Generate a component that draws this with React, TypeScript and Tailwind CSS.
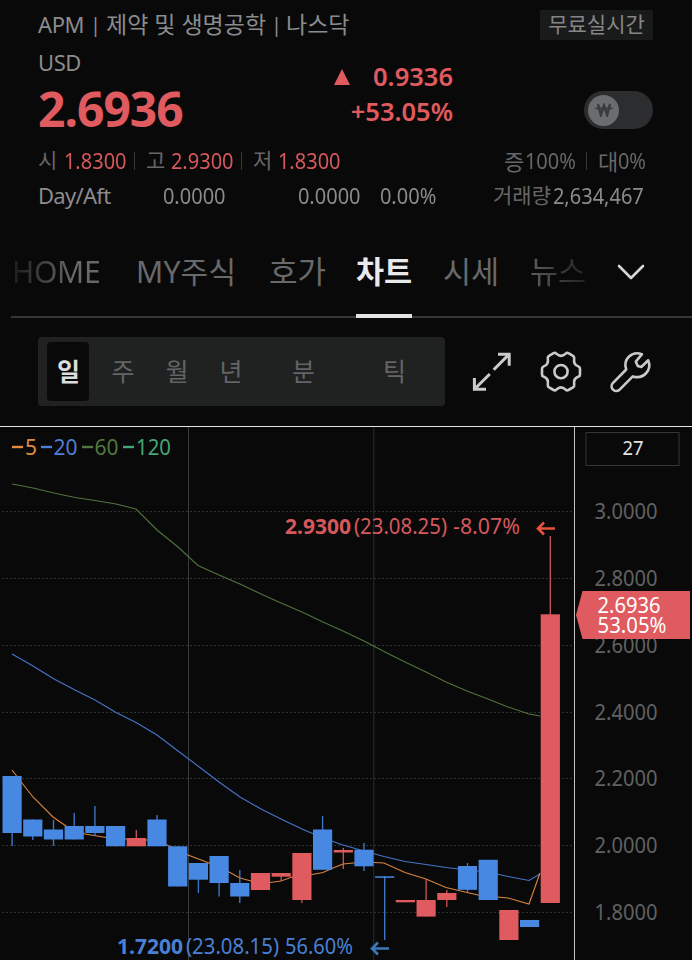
import React from 'react'

type Candle = { top: number; bottom: number; high?: number; low?: number; up?: boolean }

const RED = '#e05b5f'
const BLUE = '#4788e3'
const STEP = 20.7

const candles: Candle[] = [
  { top: 776, bottom: 833, low: 846 },
  { top: 819.5, bottom: 836.5, low: 840 },
  { top: 829.5, bottom: 839.5, high: 820, low: 846 },
  { top: 826, bottom: 839.5, high: 813 },
  { top: 826, bottom: 833, high: 806, low: 836 },
  { top: 826, bottom: 846.3 },
  { top: 838, bottom: 846.3, high: 830, up: true },
  { top: 819.5, bottom: 846.3, high: 815 },
  { top: 846.3, bottom: 886.5 },
  { top: 863, bottom: 879.7, low: 893 },
  { top: 856, bottom: 883, low: 896.5 },
  { top: 883, bottom: 896.5, high: 870, low: 903 },
  { top: 873, bottom: 890, up: true },
  { top: 873, bottom: 876.7, low: 881, up: true },
  { top: 853, bottom: 900, low: 903, up: true },
  { top: 829.5, bottom: 869.8, high: 816 },
  { top: 850, bottom: 852.5, high: 848, low: 869, up: true },
  { top: 849.7, bottom: 866.3, high: 843, low: 871 },
  { top: 876.3, bottom: 877.8, low: 940 },
  { top: 900, bottom: 902.3, up: true },
  { top: 900, bottom: 916.6, high: 879, up: true },
  { top: 893, bottom: 900, high: 890, low: 907, up: true },
  { top: 866, bottom: 889.8, high: 863, low: 892 },
  { top: 859.8, bottom: 900 },
  { top: 910, bottom: 940, up: true },
  { top: 920, bottom: 927 },
  { top: 614.3, bottom: 903, high: 536, up: true },
]

const ma5 =
  '12,770 22,783 33,797 53,817 66,826 85,834 106,837.5 126,839 147,840 167,845 188,855 209,863 229,872 240,878 251,881 270,882.5 281,881 292,877 312,874.5 323,872.5 333,868 343,864 364,862 374,862.5 384,863 405,872.5 426,879 446,887.5 467,892.5 478,895 497,897 508,898 529,904 540,873'
const ma20 =
  '12,654 33,666 54,679 75,690 95,700 116,712.5 137,723 157,735 178,751 198,766 219,782 240,797 261,809 281,819 302,829 323,838 343,845 364,851 384,856.5 405,861.5 426,864.5 446,867.5 467,870 488,872 508,876.5 529,880.5 540,874'
const ma60 =
  '12,484 33,488 54,493 75,497.5 95,500.5 116,504 136,509 157,530 178,547 198,565.5 219,575 240,584 261,594 281,603 302,612 323,622 343,631 364,641 384,651.5 405,662 426,672 446,682 467,691 488,699 508,707 529,714 540,716'

const grid = [
  { y: 511.5, label: '3.0000' },
  { y: 578.5, label: '2.8000' },
  { y: 645.5, label: '2.6000' },
  { y: 712.5, label: '2.4000' },
  { y: 778.5, label: '2.2000' },
  { y: 845.5, label: '2.0000' },
  { y: 912.5, label: '1.8000' },
]

const legend = [
  { x: 12, textX: 25, width: 12, label: '5', color: '#e08a42' },
  { x: 41, textX: 53.5, width: 24, label: '20', color: '#4f7fd6' },
  { x: 82, textX: 94.5, width: 24, label: '60', color: '#52783f' },
  { x: 123, textX: 136, width: 35, label: '120', color: '#43a67a' },
]

// narrow numerals
const Num = ({ children }: { children: React.ReactNode }) => (
  <span className="inline-block origin-left scale-x-[0.91] pb-[2px] pl-px">{children}</span>
)

const Divider = () => <span className="h-[18px] w-px bg-[#353637]" />

const Header = () => (
  <header className="h-[238px] pl-[38px] pr-[39px] text-[22px] text-[#8b8c8e]">
    <div className="flex h-[49px] items-center justify-between">
      <div className="flex items-center whitespace-pre text-[23px]">
        <span className="w-[52px] text-[22px] tracking-[-0.4px]">APM</span>
        <span className="w-[16px] text-[20px]">|</span>
        <span className="w-[165px]">제약 및 생명공학</span>
        <span className="w-[15px] text-[20px]">|</span>
        <span>나스닥</span>
      </div>
      <div className="mt-px flex h-[30px] w-[113px] items-center justify-center bg-[#191a1a] text-[21px] text-[#858688]">
        무료실시간
      </div>
    </div>

    <div className="flex h-[95px]">
      <div className="w-[215px]">
        <div className="h-[27px] leading-[27px] tracking-[-0.4px]">USD</div>
        <div className="h-[64px] text-[48px] font-bold leading-[65px] tracking-[-1px] text-[#e05b5f]">2.6936</div>
      </div>
      <div className="w-[200px] pt-[10px] text-right text-[25.5px] font-semibold text-[#e05b5f]">
        <div className="flex h-[35px] items-center justify-end">
          <svg className="mr-[23px]" width="16" height="16" viewBox="0 0 16 16">
            <path d="M8 0 L16 16 H0 Z" fill={RED} />
          </svg>
          <span>0.9336</span>
        </div>
        <div className="h-[35px] leading-[35px]">+53.05%</div>
      </div>
      <div className="ml-auto mt-[42px] flex h-[38px] w-[69px] items-center rounded-full bg-[#2c2d2f] pl-1">
        <div className="flex size-[31px] items-center justify-center rounded-full bg-[#6b6c6e]">
          <svg width="18" height="14" viewBox="0 0 18 14" fill="none" stroke="#3a3b3d" strokeWidth="2.4">
            <path d="M3 1 L5.8 12 L9 2.5 L12.2 12 L15 1" />
            <path d="M0.5 5.4 H17.5" strokeWidth="1.8" />
          </svg>
        </div>
      </div>
    </div>

    <div className="flex h-[34px] items-center justify-between whitespace-nowrap text-[#666769]">
      <div className="flex items-center">
        <span className="w-[25px] text-[21px]">시</span>
        <span className="w-[71px] text-[#d6585c]">
          <Num>1.8300</Num>
        </span>
        <Divider />
        <span className="ml-[11px] w-[24px] text-[21px]">고</span>
        <span className="w-[71px] text-[#d6585c]">
          <Num>2.9300</Num>
        </span>
        <Divider />
        <span className="ml-[11px] w-[24px] text-[21px]">저</span>
        <span className="text-[#d6585c]">
          <Num>1.8300</Num>
        </span>
      </div>
      <div className="flex w-[149px] items-center">
        <span className="w-[20px] text-[22px]">증</span>
        <span className="w-[62px]">
          <Num>100%</Num>
        </span>
        <Divider />
        <span className="ml-[11px] w-[19px] text-[22px]">대</span>
        <Num>0%</Num>
      </div>
    </div>

    <div className="flex h-[36px] items-center whitespace-nowrap">
      <span className="w-[124px] pb-[2px] tracking-[-0.7px]">Day/Aft</span>
      <span className="w-[135px]">
        <Num>0.0000</Num>
      </span>
      <span className="w-[82px]">
        <Num>0.0000</Num>
      </span>
      <Num>0.00%</Num>
      <span className="ml-auto flex w-[160px] items-center">
        <span className="w-[64px] text-[21px] text-[#666769]">거래량</span>
        <Num>2,634,467</Num>
      </span>
    </div>
  </header>
)

const Tabs = () => (
  <nav className="ml-[11px] flex h-[80px] whitespace-nowrap border-b-2 border-[#343536] text-[30px] leading-[67px] text-[#68696b]">
    <span className="ml-px w-[124px] bg-gradient-to-r from-[#1c1d1e] to-[#68696b] to-50% bg-clip-text tracking-[-0.3px] text-transparent">
      HOME
    </span>
    <span className="w-[133px] tracking-[0.2px]">MY주식</span>
    <span className="w-[76px] text-[31px]">호가</span>
    <span className="ml-[11px] mb-[-2px] w-[56px] border-b-4 border-[#e2e3e5] text-[30.5px] font-bold text-[#e9eaec]">차트</span>
    <span className="ml-[31px] w-[87px] text-[30.5px]">시세</span>
    <span className="w-[57px] bg-gradient-to-r from-[#5c5d5f] to-[#202122] bg-clip-text text-[30.5px] text-transparent">뉴스</span>
    <svg className="ml-[30px] mt-[26px]" width="28" height="17" viewBox="0 0 28 17" fill="none">
      <path d="M2 2 L14 14 L26 2" stroke="#d6d7d9" strokeWidth="2.6" strokeLinecap="round" strokeLinejoin="round" />
    </svg>
  </nav>
)

const Toolbar = () => (
  <div className="flex h-[108px] pl-[38px] pt-[19px]">
    <div className="flex h-[69px] w-[407px] items-center rounded bg-[#202221] pl-[9px] text-center text-[25px] text-[#636465]">
      <span className="mr-[7px] h-[59px] w-[42px] rounded bg-[#090909] pl-px font-bold leading-[59px] text-[#dcdddf]">일</span>
      <span className="w-[54px]">주</span>
      <span className="w-[54px]">월</span>
      <span className="w-[54px]">년</span>
      <span className="w-[91px]">분</span>
      <span className="w-[91px]">틱</span>
    </div>
    <svg className="ml-[25px] mt-[12px]" width="184" height="46" viewBox="470 349 184 46" fill="none" stroke="#c9cacc" strokeWidth="3">
      <path d="M498 354.2 H509.2 V365.8 M509 354.4 L493.7 369.7" />
      <path d="M474.4 378 V389.2 H486 M474.7 389 L489.8 374" />
      <g strokeLinejoin="round" strokeLinecap="round" strokeWidth="2.6">
        <path d="M553.6 353.2 Q555.2 352.4 556.3 353.6 Q561 358 565.7 353.6 Q566.8 352.4 568.4 353.2 L573 355.8 Q574.5 356.8 574.2 358.5 C573.4 363.2 574.6 365.4 578.6 366.6 Q580 367.2 580 368.8 V374.5 Q580 376.1 578.6 376.6 C574.6 377.9 573.4 380.2 574.2 384.8 Q574.5 386.6 573 387.4 L568.4 390 Q566.8 390.8 565.7 389.6 Q561 385.2 556.3 389.6 Q555.2 390.8 553.6 390 L549 387.4 Q547.5 386.6 547.8 384.8 C548.6 380.2 547.4 377.9 543.4 376.6 Q542 376.1 542 374.5 V368.8 Q542 367.2 543.4 366.6 C547.4 365.4 548.6 363.2 547.8 358.5 Q547.5 356.8 549 355.8 Z" />
        <circle cx="561" cy="371.6" r="6.6" />
        <path d="M642 354.2 C632 350.5 622.8 358.8 626.2 369.5 L612.8 383.2 C608.8 387.4 615.2 393.8 619.4 389.8 L632.8 376.4 C643.5 379.8 652.3 370 648.2 360.3 L641.3 367 L637.7 366 L635.8 361.6 Z" />
      </g>
    </svg>
  </div>
)

const Chart = () => (
  <svg className="block" width="692" height="534" viewBox="0 426 692 534" fontSize="22">
    {grid.map((g) => (
      <g key={g.label}>
        <line x1="2" x2="574" y1={g.y} y2={g.y} stroke="#303131" strokeDasharray="2 2" />
        <text x="594.5" y={g.y + 7} textLength="63" lengthAdjust="spacingAndGlyphs" fill="#606163">
          {g.label}
        </text>
      </g>
    ))}
    <path d="M188.5 427 V960" stroke="#3a3b3b" />
    <path d="M373.8 427 V960" stroke="#2c2d2d" />

    <g fill="none" strokeWidth="1.1">
      <polyline points={ma60} stroke="#50733f" />
      <polyline points={ma20} stroke="#4675c9" />
      <polyline points={ma5} stroke="#d98540" />
    </g>

    {candles.map((c, i) => {
      const x = 12.1 + i * STEP
      const color = c.up ? RED : BLUE
      return (
        <g key={i}>
          <line x1={x} x2={x} y1={c.high ?? c.top} y2={c.low ?? c.bottom} stroke={color} strokeWidth="1.4" opacity="0.85" />
          <rect x={x - 9.6} y={c.top} width="19.2" height={c.bottom - c.top} fill={color} />
        </g>
      )
    })}

    {legend.map((l) => (
      <g key={l.label} fill={l.color}>
        <rect x={l.x} y="445.8" width="11" height="2.4" />
        <text x={l.textX} y="455" textLength={l.width} lengthAdjust="spacingAndGlyphs">
          {l.label}
        </text>
      </g>
    ))}

    <g fill="#d6585c">
      <text x="285" y="534" fontWeight="700" textLength="66" lengthAdjust="spacingAndGlyphs">2.9300</text>
      <text x="354" y="534" textLength="93" lengthAdjust="spacingAndGlyphs">(23.08.25)</text>
      <text x="453" y="534" textLength="67" lengthAdjust="spacingAndGlyphs">-8.07%</text>
    </g>
    <path d="M555 528.5 H538 M544 522.5 L538 528.5 L544 534.5" fill="none" stroke="#e5533b" strokeWidth="2.6" />

    <g fill="#4a80d4">
      <text x="117" y="954" fontWeight="700" textLength="66" lengthAdjust="spacingAndGlyphs">1.7200</text>
      <text x="186" y="954" textLength="93" lengthAdjust="spacingAndGlyphs">(23.08.15)</text>
      <text x="285" y="954" textLength="68" lengthAdjust="spacingAndGlyphs">56.60%</text>
    </g>
    <path d="M389 948.5 H372 M378 942.5 L372 948.5 L378 954.5" fill="none" stroke="#3b78b8" strokeWidth="2.6" />

    <path d="M0 426.5 H692" stroke="#e4e4e6" />
    <path d="M574.5 427 V960" stroke="#c4c4c6" />
    <rect x="586" y="432.5" width="93" height="33" fill="#090909" stroke="#353637" />
    <text x="622.5" y="455" fontSize="19" textLength="21" lengthAdjust="spacingAndGlyphs" fill="#e2e3e5">27</text>

    <path d="M576 615 L582.5 591 H690 V639 H582.5 Z" fill={RED} />
    <text x="597.5" y="613" textLength="63" lengthAdjust="spacingAndGlyphs" fill="#fff">2.6936</text>
    <text x="597.5" y="632.5" textLength="69" lengthAdjust="spacingAndGlyphs" fill="#fff">53.05%</text>
  </svg>
)

export default function App() {
  return (
    <main className="h-[960px] w-[692px] overflow-hidden bg-[#090909] font-['Noto_Sans','Noto_Sans_CJK_KR',sans-serif]">
      <Header />
      <Tabs />
      <Toolbar />
      <Chart />
    </main>
  )
}
